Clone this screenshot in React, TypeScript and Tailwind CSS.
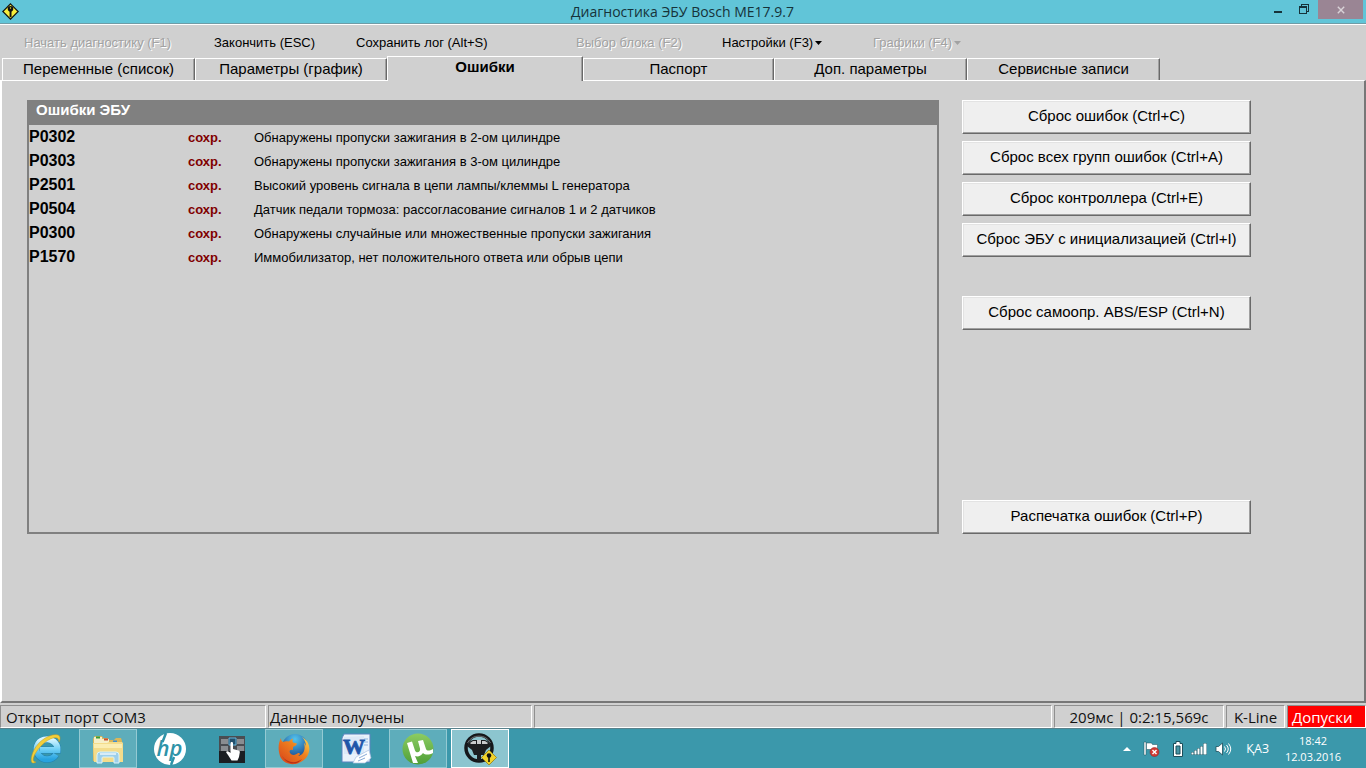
import type { ReactNode } from 'react'
import clsx from 'clsx'

interface IMenuItem {
  label: string
  width: string
  disabled?: boolean
  dropdown?: boolean
}

interface ITabItem {
  label: string
  width: string
}

interface IErrorItem {
  code: string
  state: string
  text: string
}

const menuItems: IMenuItem[] = [
  { label: 'Начать диагностику (F1)', width: 'w-[190px]', disabled: true },
  { label: 'Закончить (ESC)', width: 'w-[142px]' },
  { label: 'Сохранить лог (Alt+S)', width: 'w-[220px]' },
  { label: 'Выбор блока (F2)', width: 'w-[146px]', disabled: true },
  { label: 'Настройки (F3)', width: 'w-[151px]', dropdown: true },
  {
    label: 'Графики (F4)',
    width: 'w-[151px]',
    disabled: true,
    dropdown: true,
  },
]

const tabs: ITabItem[] = [
  { label: 'Переменные (список)', width: 'w-[193px]' },
  { label: 'Параметры (график)', width: 'w-[192px]' },
  { label: 'Ошибки', width: 'w-[196px]' },
  { label: 'Паспорт', width: 'w-[191px]' },
  { label: 'Доп. параметры', width: 'w-[193px]' },
  { label: 'Сервисные записи', width: 'w-[193px]' },
]

const activeTab = 'Ошибки'

const errors: IErrorItem[] = [
  {
    code: 'P0302',
    state: 'сохр.',
    text: 'Обнаружены пропуски зажигания в 2-ом цилиндре',
  },
  {
    code: 'P0303',
    state: 'сохр.',
    text: 'Обнаружены пропуски зажигания в 3-ом цилиндре',
  },
  {
    code: 'P2501',
    state: 'сохр.',
    text: 'Высокий уровень сигнала в цепи лампы/клеммы L генератора',
  },
  {
    code: 'P0504',
    state: 'сохр.',
    text: 'Датчик педали тормоза: рассогласование сигналов 1 и 2 датчиков',
  },
  {
    code: 'P0300',
    state: 'сохр.',
    text: 'Обнаружены случайные или множественные пропуски зажигания',
  },
  {
    code: 'P1570',
    state: 'сохр.',
    text: 'Иммобилизатор, нет положительного ответа или обрыв цепи',
  },
]

const TitleBar = () => (
  <header className="flex h-6 items-start justify-between border-b border-[#6f9ca6] bg-[#61c5d8] font-['Open_Sans','Noto_Sans',sans-serif]">
    <div className="flex flex-1 pt-[3px] pl-[2px]">
      <svg width="17" height="17" viewBox="0 0 17 17" aria-hidden="true">
        <path
          d="M8.5.8 16.2 8.5 8.5 16.2.8 8.5Z"
          fill="#f6ee3c"
          stroke="#111"
          strokeWidth="1.2"
        />
        <circle cx="8.5" cy="5.8" r="2.8" fill="#111" />
        <circle cx="8.5" cy="5" r=".7" fill="#f6ee3c" />
        <path d="M7.6 7h1.9v6.5l-1 .9-.9-.9Z" fill="#111" />
      </svg>
    </div>
    <h1 className="text-[14px] leading-6 text-[#16333a]">
      Диагностика ЭБУ Bosch ME17.9.7
    </h1>
    <div className="flex flex-1 justify-end pr-[3px]">
      <button aria-label="Свернуть" className="flex h-[19px] w-6 justify-center pt-[11px]">
        <span className="h-[2px] w-2 bg-[#16333a]" />
      </button>
      <button aria-label="Развернуть" className="mr-[2px] ml-[2px] flex h-[19px] w-6 justify-center pt-1">
        <svg width="10" height="10" viewBox="0 0 10 10" fill="none" stroke="#16333a" shapeRendering="crispEdges">
          <path d="M2.5 2V.5h7v7H8" />
          <path d="M.5 2.5h7v7h-7z" />
          <path d="M.5 3.5h7" />
        </svg>
      </button>
      <button aria-label="Закрыть" className="flex h-[19px] w-[45px] items-center justify-center bg-[#9a8594]">
        <svg width="8" height="8" viewBox="0 0 8 8" stroke="#d9d3d8" strokeWidth="1.4">
          <path d="m.8.8 6.4 6.4M7.2.8.8 7.2" />
        </svg>
      </button>
    </div>
  </header>
)

const Menu = () => (
  <nav className="flex h-8 items-center border-t border-white pt-1 pl-6">
    {menuItems.map((d) => (
      <div key={d.label} className={d.width}>
        <button
          disabled={d.disabled}
          className={clsx(
            'flex items-center gap-[2px] text-[13px] leading-4 whitespace-nowrap',
            d.disabled
              ? 'text-[#a2a2a2] [text-shadow:1px_1px_0_#fff]'
              : 'text-black'
          )}
        >
          {d.label}
          {d.dropdown && (
            <svg width="7" height="4" viewBox="0 0 7 4" fill="currentColor">
              <path d="M0 0h7L3.5 4Z" />
            </svg>
          )}
        </button>
      </div>
    ))}
  </nav>
)

const Tabs = () => (
  <div role="tablist" className="flex h-6 items-end pl-[2px]">
    {tabs.map((d) => {
      const isActive = d.label === activeTab
      return (
        <button
          key={d.label}
          role="tab"
          aria-selected={isActive}
          className={clsx(
            'border border-b-0 border-t-white border-r-[#696969] border-l-white bg-[#d0d0d0] text-[15px] leading-[18px] whitespace-nowrap shadow-[inset_-1px_0_0_#a0a0a0]',
            d.width,
            isActive ? 'z-10 -mb-px h-[25px] pb-[5px] font-bold' : 'h-[22px] pb-[2px]'
          )}
        >
          {d.label}
        </button>
      )
    })}
  </div>
)

const ErrorList = () => (
  <section className="h-[434px] min-w-0 flex-1 border-2 border-[#808080]">
    <h2 className="h-[23px] bg-[#808080] pl-[7px] text-[15px] leading-4 font-bold text-white">
      Ошибки ЭБУ
    </h2>
    <table className="w-full table-fixed text-left text-[13px]">
      <colgroup>
        <col className="w-[159px]" />
        <col className="w-[66px]" />
        <col />
      </colgroup>
      <tbody>
        {errors.map((d) => (
          <tr key={d.code} className="h-6 leading-5">
            <th className="p-0 text-[16px] font-bold">{d.code}</th>
            <td className="p-0 pt-[2px] font-bold text-[#800000]">{d.state}</td>
            <td className="p-0 pt-[2px]">{d.text}</td>
          </tr>
        ))}
      </tbody>
    </table>
  </section>
)

const ActionButton = ({
  children,
  className,
}: {
  children: ReactNode
  className?: string
}) => (
  <button
    className={clsx(
      'h-[34px] border border-t-white border-r-[#696969] border-b-[#696969] border-l-white bg-[#efefef] pb-[2px] text-[15px] leading-5 whitespace-nowrap shadow-[inset_-1px_-1px_0_#a0a0a0,inset_1px_1px_0_#e3e3e3]',
      className
    )}
  >
    {children}
  </button>
)

const Actions = () => (
  <aside className="flex h-[434px] w-[289px] flex-col gap-[7px]">
    <ActionButton>Сброс ошибок (Ctrl+C)</ActionButton>
    <ActionButton>Сброс всех групп ошибок (Ctrl+A)</ActionButton>
    <ActionButton>Сброс контроллера (Ctrl+E)</ActionButton>
    <ActionButton>Сброс ЭБУ с инициализацией (Ctrl+I)</ActionButton>
    <ActionButton className="mt-8">
      Сброс самоопр. ABS/ESP (Ctrl+N)
    </ActionButton>
    <ActionButton className="mt-auto">Распечатка ошибок (Ctrl+P)</ActionButton>
  </aside>
)

const StatusCell = ({
  children,
  className,
}: {
  children?: ReactNode
  className?: string
}) => (
  <div
    className={clsx(
      'h-[23px] border border-t-[#909090] border-r-white border-b-white border-l-[#909090] whitespace-nowrap',
      className
    )}
  >
    {children}
  </div>
)

const StatusBar = () => (
  <footer className="flex h-[25px] items-end gap-[2px] bg-[#d0d0d0] font-['Open_Sans','Noto_Sans',sans-serif] text-[15px] leading-[22px] text-[#111]">
    <StatusCell className="w-[266px] pl-[5px]">Открыт порт COM3</StatusCell>
    <StatusCell className="w-[264px] pl-px">Данные получены</StatusCell>
    <StatusCell className="flex-1" />
    <StatusCell className="w-[170px] text-center">
      209мс | 0:2:15,569с
    </StatusCell>
    <StatusCell className="w-[59px] text-center">K-Line</StatusCell>
    <StatusCell className="w-[79px] bg-[#ff0000] pl-1 text-white">
      Допуски
    </StatusCell>
  </footer>
)

const ExplorerIcon = () => (
  <svg width="34" height="34" viewBox="0 0 34 34">
    <path d="M2 6.500 4 4h7l1 2h5l1 2h5l2-2h5l1 3v20H2Z" fill="#d9b65a" />
    <path d="M3 5h8v2h7v3h12v4H3Z" fill="#f7efc8" />
    <path d="M5 4.500h4v2H5z" fill="#3a9b35" />
    <path d="M13 6.500h4v2h-4z" fill="#c94f35" />
    <path d="M22 8.500h4v2h-4z" fill="#3f8fd0" />
    <path d="M2 11h14l2-1h13l1 1v19H3Z" fill="#f4dc8b" />
    <path d="M3 12h28v4H3Z" fill="#fbedb2" />
    <path
      d="M6 31V23q0-3 3-3h16q3 0 3 3v8h-5v-5q0-1-1-1H12q-1 0-1 1v5Z"
      fill="#9dcfea"
      stroke="#d9f3fb"
      strokeWidth="1"
    />
    <path d="M9 22h16" stroke="#fff" strokeWidth="1.2" />
  </svg>
)

const IeIcon = () => (
  <svg width="34" height="34" viewBox="0 0 34 34">
    <defs>
      <linearGradient id="ie" x1="0" y1="0" x2="0" y2="1">
        <stop offset="0" stopColor="#d6f5ff" />
        <stop offset=".5" stopColor="#6fd0f5" />
        <stop offset="1" stopColor="#28a3df" />
      </linearGradient>
    </defs>
    <path
      d="M27 22.500A10.500 10 0 1 1 28.500 18H11"
      fill="none"
      stroke="#2382b0"
      strokeWidth="7"
    />
    <path
      d="M27 22.500A10.500 10 0 1 1 28.500 18H11"
      fill="none"
      stroke="url(#ie)"
      strokeWidth="6"
    />
    <path
      d="M7 30C1 34 1 26 5 18C10 8 22 1 29 3C32 4 31 8 30 10C30 6 28 5 24 6C17 8 10 15 6 22C3 28 4 30 7 30Z"
      fill="#f2cf3b"
      stroke="#c99a1b"
      strokeWidth=".5"
    />
  </svg>
)

const HpIcon = () => (
  <svg width="34" height="34" viewBox="0 0 34 34">
    <circle cx="17" cy="17" r="16" fill="#fff" />
    <text
      x="16.500"
      y="24"
      textAnchor="middle"
      fontFamily="Open Sans, sans-serif"
      fontSize="22"
      fontStyle="italic"
      fontWeight="600"
      fill="#2e93a8"
    >
      hp
    </text>
    <path d="m13 1-3.500 9M21 25l-3 8" stroke="#2e93a8" strokeWidth="2.500" />
  </svg>
)

const TouchIcon = () => (
  <svg width="34" height="34" viewBox="0 0 34 34">
    <path d="M4 4h26v27H4z" fill="#1b1e22" />
    <path d="M4 4h26v15H4z" fill="#4a4d52" />
    <g fill="#8a8d91">
      <path d="M6 7h7v5H6zM22 7h7v5h-7zM6 14h7v5H6zM22 14h7v5h-7z" />
    </g>
    <path d="M14 6h7v7h-7z" fill="#23506c" stroke="#63b5dd" />
    <path
      d="M15.500 11c0-1.500 2.500-1.500 2.500 0v6l5.500 1.500c1 .3 1.500 1 1.300 2L24 25l-1.500 3.500h-6L13 23l-1.800-2.500c0-1.500 1.800-1.700 3-.5l1.300 1Z"
      fill="#fff"
    />
  </svg>
)

const FirefoxIcon = () => (
  <svg width="34" height="34" viewBox="0 0 34 34">
    <defs>
      <radialGradient id="globe" cx=".5" cy=".2" r=".8">
        <stop offset="0" stopColor="#53c4ee" />
        <stop offset="1" stopColor="#153d86" />
      </radialGradient>
      <linearGradient id="fox" x1="0" y1="1" x2="1" y2="0">
        <stop offset="0" stopColor="#d6401a" />
        <stop offset=".6" stopColor="#f0821f" />
        <stop offset="1" stopColor="#fbdf55" />
      </linearGradient>
    </defs>
    <circle cx="18" cy="15" r="13" fill="url(#globe)" />
    <path
      d="M4 6c0 2 .5 3 2 4 1.500-1 4-1 6-.5C14 7.500 14 7 16 6.500c-1 2-.5 3 0 4l4 1c-.5 2-2.500 2.500-4 3.500 0 2 0 2 0 3-3-1-4 1-3 3 2 3 6 2 8 0 3 0 2 2 0 3 5-1 8-6 6-13 1 1 2 2 2 4 0-4-1-7-4-10 9 5 9 15 4 21C21 35 7 34 3 24 1 18 1 11 4 6Z"
      fill="url(#fox)"
    />
    <path d="M5 24c5 7 14 8 20 3-5 7-15 6-20-3Z" fill="#b92f17" />
  </svg>
)

const WordIcon = () => (
  <svg width="34" height="34" viewBox="0 0 34 34">
    <path d="M5 2h26v28H3V6Z" fill="#eaf2fb" stroke="#5b83bf" />
    <path d="M25 7h4M25 10h4M25 13h4" stroke="#94b5df" />
    <path d="M5 5 25 4v18L5 22Z" fill="#dce9f8" />
    <text
      x="15"
      y="22"
      textAnchor="middle"
      fontFamily="Liberation Serif, serif"
      fontSize="22"
      fontWeight="700"
      fill="#1f55a8"
      stroke="#1f55a8"
      strokeWidth=".8"
    >
      W
    </text>
    <path d="m17 25 13-7 2 8-6 5H14Z" fill="#fff" stroke="#a9c1e3" strokeWidth=".7" />
    <path d="m20 26 8-4M19 29l7-3" stroke="#89aad6" />
  </svg>
)

const TorrentIcon = () => (
  <svg width="34" height="34" viewBox="0 0 34 34">
    <defs>
      <linearGradient id="torrent" x1="0" y1="0" x2="0" y2="1">
        <stop offset="0" stopColor="#8ccc62" />
        <stop offset="1" stopColor="#4f9f37" />
      </linearGradient>
    </defs>
    <circle cx="17" cy="17" r="15.500" fill="url(#torrent)" />
    <path
      d="m6 11 5-1.500 3 9c1 3 6 2 5-2L17 9l5-1 3 9c1 2 3 2 7 0l0 4c-4 2-8 2-10 0-2 3-5 4-8 3l3 7h-5Z"
      fill="#fff"
    />
  </svg>
)

const WheelIcon = () => (
  <svg width="34" height="34" viewBox="0 0 34 34">
    <circle cx="16" cy="16" r="13" fill="none" stroke="#15171a" strokeWidth="3.500" />
    <path d="M4.500 11a13 13 0 0 1 23 0" fill="none" stroke="#6e7073" strokeWidth="1" />
    <path d="M4 14q2-5 6-6h12q4 1 6 6l-5 4-2 5h-3v6h-4v-6h-3l-2-5Z" fill="#1c1e21" />
    <path d="m7 11 3-2h3v3H8ZM14 8h4v4h-4zM19 9h3l3 2-1 1h-5Z" fill="#c9cbcd" />
    <path
      d="m26 18 7.500 7.500L26 33l-7.500-7.500Z"
      fill="#f1d32c"
      stroke="#977f12"
      strokeWidth=".8"
    />
    <circle cx="26" cy="23.500" r="2.300" fill="#111" />
    <path d="M26 24v6" stroke="#111" strokeWidth="1.600" />
  </svg>
)

const taskItems = [
  { name: 'Internet Explorer', icon: <IeIcon /> },
  { name: 'Проводник', icon: <ExplorerIcon />, open: true },
  { name: 'HP', icon: <HpIcon /> },
  { name: 'Сенсорная клавиатура', icon: <TouchIcon /> },
  { name: 'Firefox', icon: <FirefoxIcon />, open: true },
  { name: 'Word', icon: <WordIcon /> },
  { name: 'Torrent', icon: <TorrentIcon />, open: true },
  { name: 'Диагностика', icon: <WheelIcon />, open: true, current: true },
]

const Tray = () => (
  <div className="flex items-center text-[12px] text-white">
    <svg width="8" height="4" viewBox="0 0 8 4" className="mr-3">
      <path d="M0 4 4 0l4 4Z" fill="#fff" />
    </svg>
    <svg width="18" height="18" viewBox="0 0 18 18" className="mr-3">
      <path d="M1 2h2v13H1z" fill="#fff" stroke="#1d4e5a" strokeWidth=".5" />
      <path
        d="M3.500 3h5l1 1.500h5V11h-5L8 9.500H3.500Z"
        fill="#fff"
        stroke="#1d4e5a"
        strokeWidth=".5"
      />
      <circle cx="11.500" cy="12" r="4.500" fill="#d23b34" stroke="#8f2320" strokeWidth=".5" />
      <path d="m9.500 10 4 4m0-4-4 4" stroke="#fff" strokeWidth="1.400" />
    </svg>
    <svg width="10" height="16" viewBox="0 0 10 16" className="mr-2">
      <path d="M3 .5h4v2h2.500v13h-9v-13H3Z" fill="#fff" stroke="#1d4e5a" />
      <path d="M3 5h4v8H3z" fill="#4795a5" stroke="#1d4e5a" />
    </svg>
    <svg width="16" height="12" viewBox="0 0 16 12" className="mr-2">
      <path
        d="M0 9h3v3H0zM3 7h3v5H3zM6 5h3v7H6zM9 3h3v9H9zM12 0h4v12h-4z"
        fill="#1d5e6c"
      />
      <path
        d="M.5 9.500h2v2h-2zM3.500 7.500h2v4h-2zM6.500 5.500h2v6h-2zM9.500 3.500h2v8h-2zM12.500 .5h3v11h-3z"
        fill="#fff"
      />
    </svg>
    <svg width="17" height="14" viewBox="0 0 17 14" className="mr-[14px]">
      <path d="M1 4.500h2.500L7.500 1v12L3.500 9.500H1Z" fill="#fff" stroke="#1d4e5a" strokeWidth=".8" />
      <path
        d="M9.500 4.500q2 2.500 0 5M11.500 3q3.500 4 0 8M13.500 1.500q4.500 5.500 0 11"
        fill="none"
        stroke="#fff"
      />
    </svg>
    <span className="mr-4">ҚАЗ</span>
    <time className="mr-[25px] text-center text-[11px] leading-4">
      18:42
      <br />
      12.03.2016
    </time>
  </div>
)

const Taskbar = () => (
  <div className="flex h-10 justify-between border-t border-[#59818b] bg-[#3b98ab] font-['Open_Sans','Noto_Sans',sans-serif]">
    <div className="flex gap-1 pl-[17px]">
      {taskItems.map((d) => (
        <button
          key={d.name}
          aria-label={d.name}
          className={clsx(
            'flex h-[39px] w-[58px] items-center justify-center border',
            !d.open && 'border-transparent',
            d.open && !d.current && 'border-[#94cad3] bg-[#5eadbb]',
            d.current && 'border-white bg-[#8cc5cf]'
          )}
        >
          {d.icon}
        </button>
      ))}
    </div>
    <Tray />
  </div>
)

export default function App() {
  return (
    <div className="flex min-h-screen flex-col bg-[#d0d0d0] font-['Liberation_Sans',Arial,sans-serif] text-black">
      <TitleBar />
      <Menu />
      <Tabs />
      <main className="flex flex-1 items-start gap-[23px] border-t border-r-2 border-b-2 border-l-2 border-t-white border-r-[#777] border-b-[#777] border-l-white pt-[19px] pr-[113px] pl-[25px]">
        <ErrorList />
        <Actions />
      </main>
      <StatusBar />
      <Taskbar />
    </div>
  )
}
